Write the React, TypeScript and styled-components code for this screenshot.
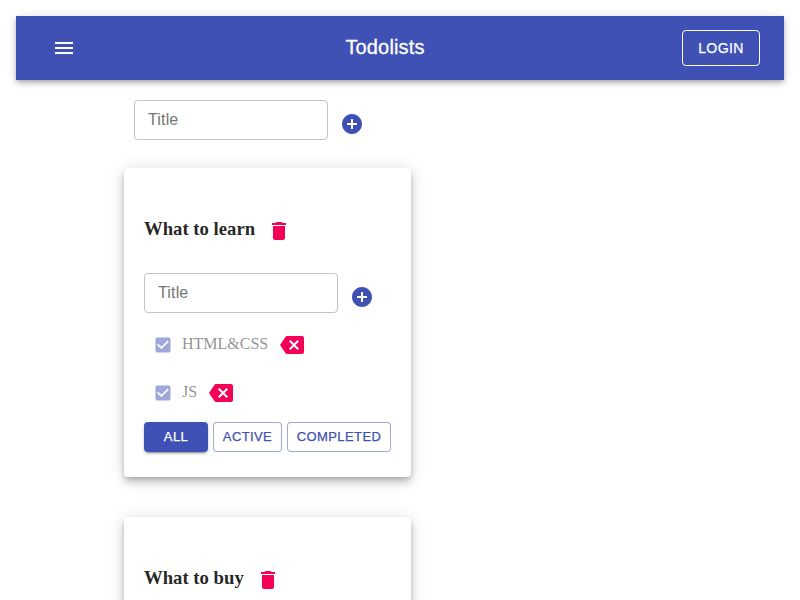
import React from "react";
import styled, { createGlobalStyle } from "styled-components";

const GlobalStyle = createGlobalStyle`
  * { box-sizing: border-box; }
  html, body { margin: 0; background: #fff; }
  body { height: 600px; overflow: hidden; color: rgba(0, 0, 0, 0.87); }
`;

const sans = `"Liberation Sans", Helvetica, Arial, sans-serif`;
const serif = `"Liberation Serif", "Times New Roman", serif`;

const Page = styled.div`
  height: 600px;
  padding: 16px;
  overflow: hidden;
`;

const AppBar = styled.header`
  display: flex;
  align-items: center;
  justify-content: space-between;
  height: 64px;
  padding: 0 24px;
  background: #3f51b5;
  color: #fff;
  box-shadow: 0 2px 4px -1px rgba(0, 0, 0, 0.2), 0 4px 5px 0 rgba(0, 0, 0, 0.14),
    0 1px 10px 0 rgba(0, 0, 0, 0.12);
`;

const IconButton = styled.button<{ $color?: string }>`
  display: flex;
  flex: none;
  padding: 12px;
  border: 0;
  background: none;
  color: ${(p) => p.$color ?? "inherit"};
`;

const BarTitle = styled.h6`
  margin: 0;
  padding-bottom: 2px;
  font: 500 20px/32px ${sans};
  letter-spacing: 0.15px;
  -webkit-text-stroke: 0.3px currentColor;
`;

const LoginButton = styled.button`
  width: 78px;
  height: 36px;
  padding: 0;
  border: 1px solid #fff;
  border-radius: 4px;
  background: none;
  color: #fff;
  font: 500 14px/24px ${sans};
  letter-spacing: 0.4px;
  -webkit-text-stroke: 0.25px currentColor;
`;

const Content = styled.main`
  width: 287px;
  margin: 20px 0 0 108px;
`;

const Form = styled.form<{ $inset?: boolean }>`
  display: flex;
  height: 48px;
  padding-left: ${(p) => (p.$inset ? 10 : 0)}px;
`;

const TitleInput = styled.input`
  flex: none;
  width: 194px;
  height: 40px;
  padding: 0 13px;
  border: 1px solid rgba(0, 0, 0, 0.23);
  border-radius: 4px;
  outline: 0;
  background: none;
  font: 16px/19px ${sans};
  letter-spacing: 0.15px;
  &::placeholder {
    color: #757575;
    opacity: 1;
  }
`;

const Card = styled.section`
  height: 309px;
  margin-bottom: 40px;
  padding: 37px 20px 20px;
  border-radius: 4px;
  background: #fff;
  box-shadow: 0 3px 5px -1px rgba(0, 0, 0, 0.2), 0 6px 10px 0 rgba(0, 0, 0, 0.14),
    0 1px 18px 0 rgba(0, 0, 0, 0.12);
`;

const Lists = styled.div`
  padding-top: 20px;
`;

const CardHeading = styled.h3`
  display: flex;
  align-items: center;
  height: 52px;
  margin: 0 0 16px;
  font: bold 18.72px/22px ${serif};
`;

const HeadingText = styled.span`
  padding-bottom: 4px;
`;

const Task = styled.div`
  display: flex;
  align-items: center;
  height: 48px;
  font: 16px/20px ${serif};
`;

const Faded = styled.div`
  display: flex;
  align-items: center;
  opacity: 0.5;
`;

const CheckBox = styled.span`
  display: flex;
  padding: 9px;
  color: #3f51b5;
`;

const TaskText = styled.span`
  padding-bottom: 2px;
`;

const Filters = styled.div`
  display: flex;
  gap: 5px;
  margin-top: 5px;
`;

const FilterButton = styled.button<{ $active?: boolean; $width: number }>`
  width: ${(p) => p.$width}px;
  height: 30px;
  padding: 0;
  border: ${(p) => (p.$active ? "0" : "1px solid rgba(63, 81, 181, 0.5)")};
  border-radius: 4px;
  background: ${(p) => (p.$active ? "#3f51b5" : "#fff")};
  color: ${(p) => (p.$active ? "#fff" : "#3f51b5")};
  font: 500 13px/22px ${sans};
  letter-spacing: 0.4px;
  -webkit-text-stroke: 0.25px currentColor;
  box-shadow: ${(p) =>
    p.$active
      ? "0 3px 1px -2px rgba(0,0,0,.2), 0 2px 2px 0 rgba(0,0,0,.14), 0 1px 5px 0 rgba(0,0,0,.12)"
      : "none"};
`;

const paths = {
  menu: "M3 18h18v-2H3v2zm0-5h18v-2H3v2zm0-7v2h18V6H3z",
  add: "M12 2C6.48 2 2 6.48 2 12s4.48 10 10 10 10-4.48 10-10S17.52 2 12 2zm5 11h-4v4h-2v-4H7v-2h4V7h2v4h4v2z",
  trash: "M6 19c0 1.1.9 2 2 2h8c1.1 0 2-.9 2-2V7H6v12zM19 4h-3.5l-1-1h-5l-1 1H5v2h14V4z",
  backspace:
    "M22 3H7c-.69 0-1.23.35-1.59.88L0 12l5.41 8.11c.36.53.9.89 1.59.89h15c1.1 0 2-.9 2-2V5c0-1.1-.9-2-2-2zm-3 12.59L17.59 17 14 13.41 10.41 17 9 15.59 12.59 12 9 8.41 10.41 7 14 10.59 17.59 7 19 8.41 15.41 12 19 15.59z",
  check:
    "M19 3H5c-1.11 0-2 .9-2 2v14c0 1.1.89 2 2 2h14c1.11 0 2-.9 2-2V5c0-1.1-.89-2-2-2zm-9 14l-5-5 1.41-1.41L10 14.17l7.59-7.59L19 8l-9 9z",
};

function Icon({ name, size = 24 }: { name: keyof typeof paths; size?: number }) {
  return (
    <svg width={size} height={size} viewBox="0 0 24 24" fill="currentColor" aria-hidden>
      <path d={paths[name]} />
    </svg>
  );
}

function AddItemForm({ inset }: { inset?: boolean }) {
  return (
    <Form $inset={inset}>
      <TitleInput placeholder="Title" />
      <IconButton type="button" $color="#3f51b5" aria-label="Add">
        <Icon name="add" />
      </IconButton>
    </Form>
  );
}

function Todolist({ title, children }: { title: string; children?: React.ReactNode }) {
  return (
    <Card>
      <CardHeading>
        <HeadingText>{title}</HeadingText>
        <IconButton $color="#f50057" aria-label="Delete list">
          <Icon name="trash" />
        </IconButton>
      </CardHeading>
      {children}
    </Card>
  );
}

function TaskRow({ text }: { text: string }) {
  return (
    <Task>
      <Faded>
        <CheckBox>
          <Icon name="check" size={20} />
        </CheckBox>
        <TaskText>{text}</TaskText>
      </Faded>
      <IconButton $color="#f50057" aria-label="Delete task">
        <Icon name="backspace" />
      </IconButton>
    </Task>
  );
}

export default function App() {
  return (
    <>
      <GlobalStyle />
      <Page>
        <AppBar>
          <IconButton aria-label="Menu">
            <Icon name="menu" />
          </IconButton>
          <BarTitle>Todolists</BarTitle>
          <LoginButton>LOGIN</LoginButton>
        </AppBar>
        <Content>
          <AddItemForm inset />
          <Lists>
            <Todolist title="What to learn">
              <AddItemForm />
              <TaskRow text="HTML&CSS" />
              <TaskRow text="JS" />
              <Filters>
                <FilterButton $active $width={64}>ALL</FilterButton>
                <FilterButton $width={69}>ACTIVE</FilterButton>
                <FilterButton $width={104}>COMPLETED</FilterButton>
              </Filters>
            </Todolist>
            <Todolist title="What to buy" />
          </Lists>
        </Content>
      </Page>
    </>
  );
}
